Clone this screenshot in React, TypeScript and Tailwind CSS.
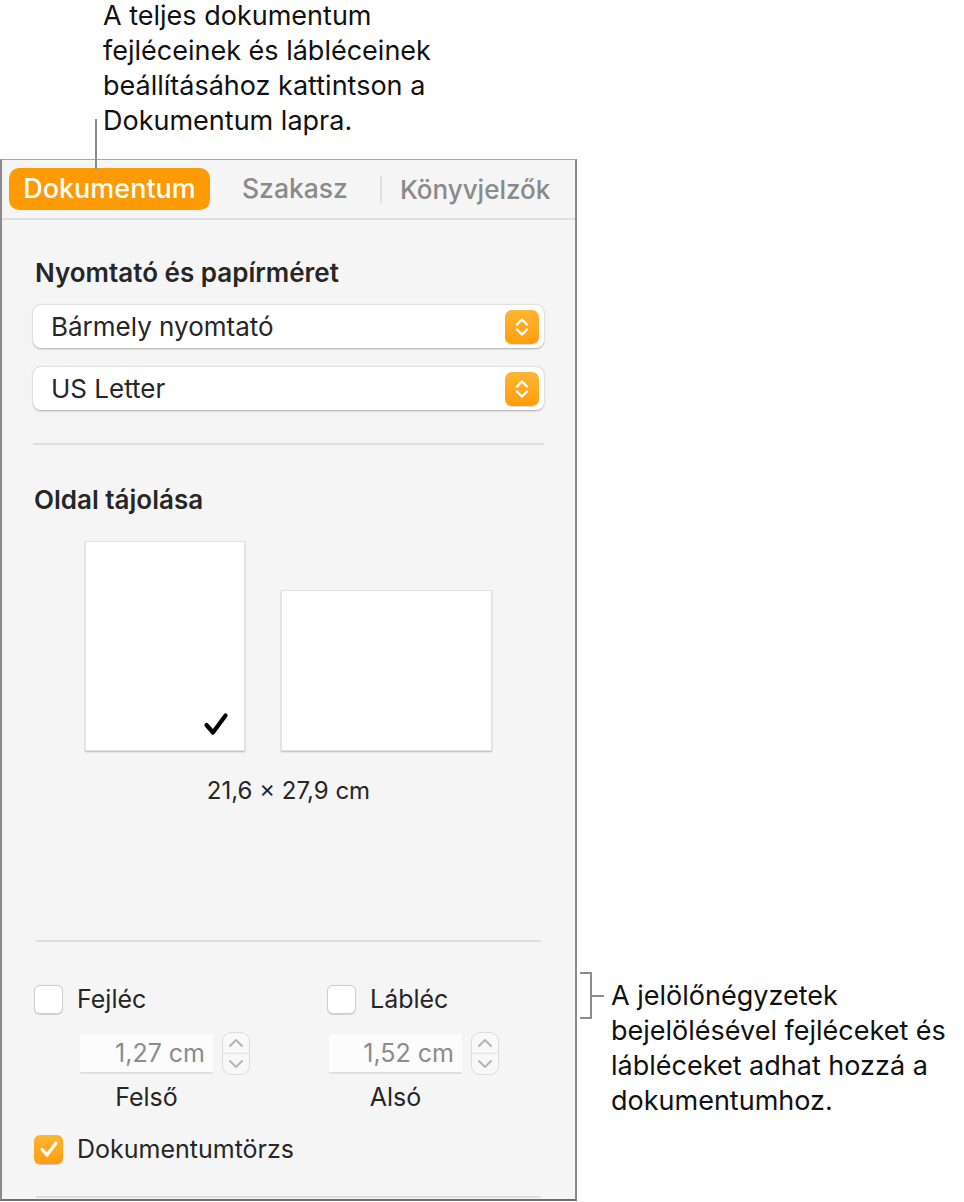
const SelectArrows = () => (
    <div className="w-[34px] h-[34px] rounded-[7px] bg-gradient-to-b from-[#ffb530] to-[#ff9e0a] flex items-center justify-center shadow-[0_1px_1px_rgba(0,0,0,0.15)]">
        <svg width="16" height="24" viewBox="0 0 16 24" fill="none" stroke="white" strokeWidth="2.4" strokeLinecap="round" strokeLinejoin="round">
            <path d="M3 9.5 L8 4.5 L13 9.5" />
            <path d="M3 14.5 L8 19.5 L13 14.5" />
        </svg>
    </div>
);

const Select = ({ label }: { label: string }) => (
    <div className="h-[43px] rounded-[8px] bg-white shadow-[0_0.5px_2px_rgba(0,0,0,0.3)] flex items-center justify-between pl-[18px] pr-[5px]">
        <span className="text-[26px] leading-[30px] text-[#262626]">{label}</span>
        <SelectArrows />
    </div>
);

const Stepper = () => (
    <div className="w-[28px] h-[43px] rounded-[9px] border border-[#dcdcdc] bg-[#f8f8f8] flex flex-col">
        <div className="flex-1 flex items-center justify-center border-b border-[#e4e4e4]">
            <svg width="16" height="10" viewBox="0 0 16 10" fill="none" stroke="#b4b4b4" strokeWidth="2" strokeLinecap="round" strokeLinejoin="round">
                <path d="M2 8 L8 2 L14 8" />
            </svg>
        </div>
        <div className="flex-1 flex items-center justify-center">
            <svg width="16" height="10" viewBox="0 0 16 10" fill="none" stroke="#b4b4b4" strokeWidth="2" strokeLinecap="round" strokeLinejoin="round">
                <path d="M2 2 L8 8 L14 2" />
            </svg>
        </div>
    </div>
);

const Box = ({ checked = false }: { checked?: boolean }) =>
    checked ? (
        <div className="w-[29px] h-[29px] rounded-[6px] bg-gradient-to-b from-[#ffb530] to-[#ff9e0a] flex items-center justify-center shadow-[0_1px_1px_rgba(0,0,0,0.2)]">
            <svg width="20" height="18" viewBox="0 0 20 18" fill="none" stroke="white" strokeWidth="3.2" strokeLinecap="round" strokeLinejoin="round">
                <path d="M3 9.5 L8 15 L17 3" />
            </svg>
        </div>
    ) : (
        <div className="w-[29px] h-[29px] rounded-[6px] bg-white border border-[#cfcfcf] shadow-[0_0.5px_1px_rgba(0,0,0,0.15)]"></div>
    );

const MarginField = ({ value, label, checkLabel, indent }: { value: string; label: string; checkLabel: string; indent: string }) => (
    <div className="flex flex-col">
        <div className="flex items-center gap-[14px]">
            <Box />
            <span className="text-[25px] leading-[30px] text-[#262626]">{checkLabel}</span>
        </div>
        <div className={`flex items-center gap-[9px] mt-[18px] ${indent}`}>
            <div className="w-[133px] h-[39px] bg-[#fcfcfc] border-b border-[#dedede] shadow-[0_0.5px_1px_rgba(0,0,0,0.08)] flex items-center justify-end pr-[8px]">
                <span className="text-[25px] leading-[30px] text-[#8c8c8c]">{value}</span>
            </div>
            <Stepper />
        </div>
        <div className={`w-[133px] mt-[7px] text-center text-[25px] leading-[30px] text-[#262626] ${indent}`}>{label}</div>
    </div>
);

export default function App() {
    return (
        <div className="w-[964px] h-[1202px] bg-white relative overflow-hidden font-['Inter',sans-serif] text-black">
            {/* top callout */}
            <div className="h-[161px] pl-[103px] -mt-[2px] text-[27px] leading-[35px] text-[#111]">
                A teljes dokumentum
                <br />
                fejléceinek és lábléceinek
                <br />
                beállításához kattintson a
                <br />
                Dokumentum lapra.
            </div>
            <div className="absolute left-[95px] top-[119px] w-[2px] h-[50px] bg-[#8c8c8c]"></div>

            <div className="flex items-start">
                {/* inspector panel */}
                <div className="w-[577px] h-[1042px] bg-[#f5f5f5] border-t border-x-2 border-b-2 border-t-[#a8a8a8] border-x-[#8a8a8a] border-b-[#6e6e6e] flex flex-col">
                    <div className="flex items-center pl-[7px] pt-[8px] pb-[8px] border-b-2 border-[#dfdfdf]">
                        <div className="w-[201px] h-[42px] rounded-[10px] bg-[#fe9a05] flex items-center justify-center text-[27px] font-medium text-white">
                            Dokumentum
                        </div>
                        <span className="ml-[32px] text-[26.5px] font-medium text-[#8a8a8a]">Szakasz</span>
                        <div className="ml-[32px] w-[2px] h-[27px] bg-[#e0e0e0]"></div>
                        <span className="ml-[18px] text-[26px] font-medium text-[#8a8a8a]">Könyvjelzők</span>
                    </div>

                    <div className="flex flex-col px-[31px]">
                        <h2 className="mt-[38px] ml-[2px] text-[26px] leading-[30px] font-semibold text-[#262626]">
                            Nyomtató és papírméret
                        </h2>
                        <div className="mt-[17px]">
                            <Select label="Bármely nyomtató" />
                        </div>
                        <div className="mt-[19px]">
                            <Select label="US Letter" />
                        </div>
                        <div className="mt-[33px] h-[2px] bg-[#dedede]"></div>

                        <h2 className="mt-[40px] ml-[1px] text-[26px] leading-[30px] font-semibold text-[#262626]">
                            Oldal tájolása
                        </h2>
                        <div className="mt-[26px] flex items-end justify-center gap-[36px]">
                            <div className="w-[160px] h-[210px] bg-white border border-[#e2e2e2] shadow-[0_1px_1.5px_rgba(0,0,0,0.25)] flex items-end justify-end pr-[15px] pb-[14px]">
                                <svg width="26" height="24" viewBox="0 0 26 24" fill="none" stroke="black" strokeWidth="4.2" strokeLinecap="round" strokeLinejoin="round">
                                    <path d="M3.5 13 L10 20.5 L22.5 3.5" />
                                </svg>
                            </div>
                            <div className="w-[211px] h-[161px] bg-white border border-[#e2e2e2] shadow-[0_1px_1.5px_rgba(0,0,0,0.25)]"></div>
                        </div>
                        <div className="mt-[25px] text-center text-[24px] leading-[30px] text-[#262626]">21,6 × 27,9 cm</div>

                        <div className="mt-[134px] mx-[3px] h-[2px] bg-[#dedede]"></div>

                        <div className="mt-[42px] flex">
                            <div className="w-[294px] pl-[1px]">
                                <MarginField value="1,27 cm" label="Felső" checkLabel="Fejléc" indent="ml-[46px]" />
                            </div>
                            <MarginField value="1,52 cm" label="Alsó" checkLabel="Lábléc" indent="ml-[2px]" />
                        </div>

                        <div className="mt-[22px] pl-[1px] flex items-center gap-[14px]">
                            <Box checked />
                            <span className="text-[25px] leading-[30px] text-[#262626]">Dokumentumtörzs</span>
                        </div>
                        <div className="mt-[32px] mx-[3px] h-[2px] bg-[#dedede]"></div>
                    </div>
                </div>

                {/* right callout */}
                <div className="mt-[813px] ml-[3px] flex items-start">
                    <svg width="26" height="48" viewBox="0 0 26 48" fill="none" stroke="#8c8c8c" strokeWidth="2">
                        <path d="M0 1 H11 V46 H0" />
                        <path d="M11 24 H24" />
                    </svg>
                    <div className="ml-[5px] mt-[6px] text-[27px] leading-[35px] text-[#111]">
                        A jelölőnégyzetek
                        <br />
                        bejelölésével fejléceket és
                        <br />
                        lábléceket adhat hozzá a
                        <br />
                        dokumentumhoz.
                    </div>
                </div>
            </div>
        </div>
    );
}
